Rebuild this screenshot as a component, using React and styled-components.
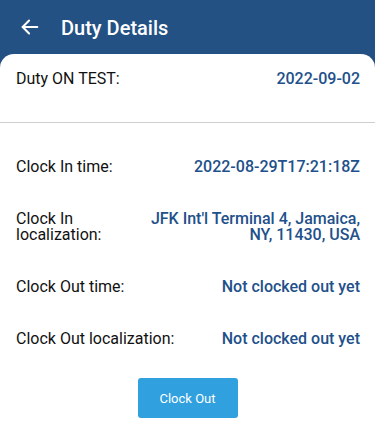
import React from "react"
import styled, { createGlobalStyle } from "styled-components"

const GlobalStyle = createGlobalStyle`
  body {
    margin: 0;
    background: #235184;
    font-family: Roboto, "Liberation Sans", sans-serif;
  }
`

const Page = styled.div`
  width: 375px;
  height: 440px;
  background: #235184;
  display: flex;
  flex-direction: column;
  overflow: hidden;
`

const Header = styled.header`
  height: 54px;
  display: flex;
  align-items: center;
  padding: 0 0 0 19px;
  gap: 20px;
  color: #fff;

  h1 {
    margin: 0;
    font-size: 20px;
    font-weight: 500;
    padding-top: 1px;
  }
`

const BackButton = styled.button`
  background: none;
  border: 0;
  padding: 0;
  display: flex;
  color: #fff;
`

const Card = styled.main`
  flex: 1;
  background: #fff;
  border-radius: 14px 14px 0 0;
  display: flex;
  flex-direction: column;
`

const Top = styled.section`
  padding: 17px 15px 0 16px;
  height: 51px;
  border-bottom: 1px solid #cfcfcf;
`

const List = styled.section`
  padding: 36px 15px 0 16px;
  display: flex;
  flex-direction: column;
  gap: 36px;
`

const Row = styled.div`
  display: flex;
  justify-content: space-between;
  align-items: flex-start;
  font-size: 16px;
  line-height: 16px;
`

const Label = styled.span`
  color: #111;
  padding-right: 4px;
`

const Value = styled.span`
  color: #22508a;
  font-weight: 500;
  text-align: right;
  max-width: 215px;
`

const Actions = styled.div`
  display: flex;
  justify-content: center;
  padding-top: 31px;
`

const ClockButton = styled.button`
  width: 100px;
  height: 40px;
  border: 0;
  border-radius: 3px;
  background: #30a0df;
  color: #fff;
  font-family: inherit;
  font-size: 13px;
`

const rows = [
  ["Clock In time:", "2022-08-29T17:21:18Z"],
  ["Clock In localization:", "JFK Int'l Terminal 4, Jamaica, NY, 11430, USA"],
  ["Clock Out time:", "Not clocked out yet"],
  ["Clock Out localization:", "Not clocked out yet"],
]

export default function App() {
  return (
    <Page>
      <GlobalStyle />
      <Header>
        <BackButton>
          <svg width="22" height="22" viewBox="0 0 24 24" fill="none" stroke="currentColor" strokeWidth="2.2" strokeLinecap="round" strokeLinejoin="round">
            <path d="M20 12H4" />
            <path d="M11 5l-7 7 7 7" />
          </svg>
        </BackButton>
        <h1>Duty Details</h1>
      </Header>
      <Card>
        <Top>
          <Row>
            <Label>Duty ON TEST:</Label>
            <Value>2022-09-02</Value>
          </Row>
        </Top>
        <List>
          {rows.map(([label, value]) => (
            <Row key={label}>
              <Label>{label}</Label>
              <Value>{value}</Value>
            </Row>
          ))}
        </List>
        <Actions>
          <ClockButton>Clock Out</ClockButton>
        </Actions>
      </Card>
    </Page>
  )
}
